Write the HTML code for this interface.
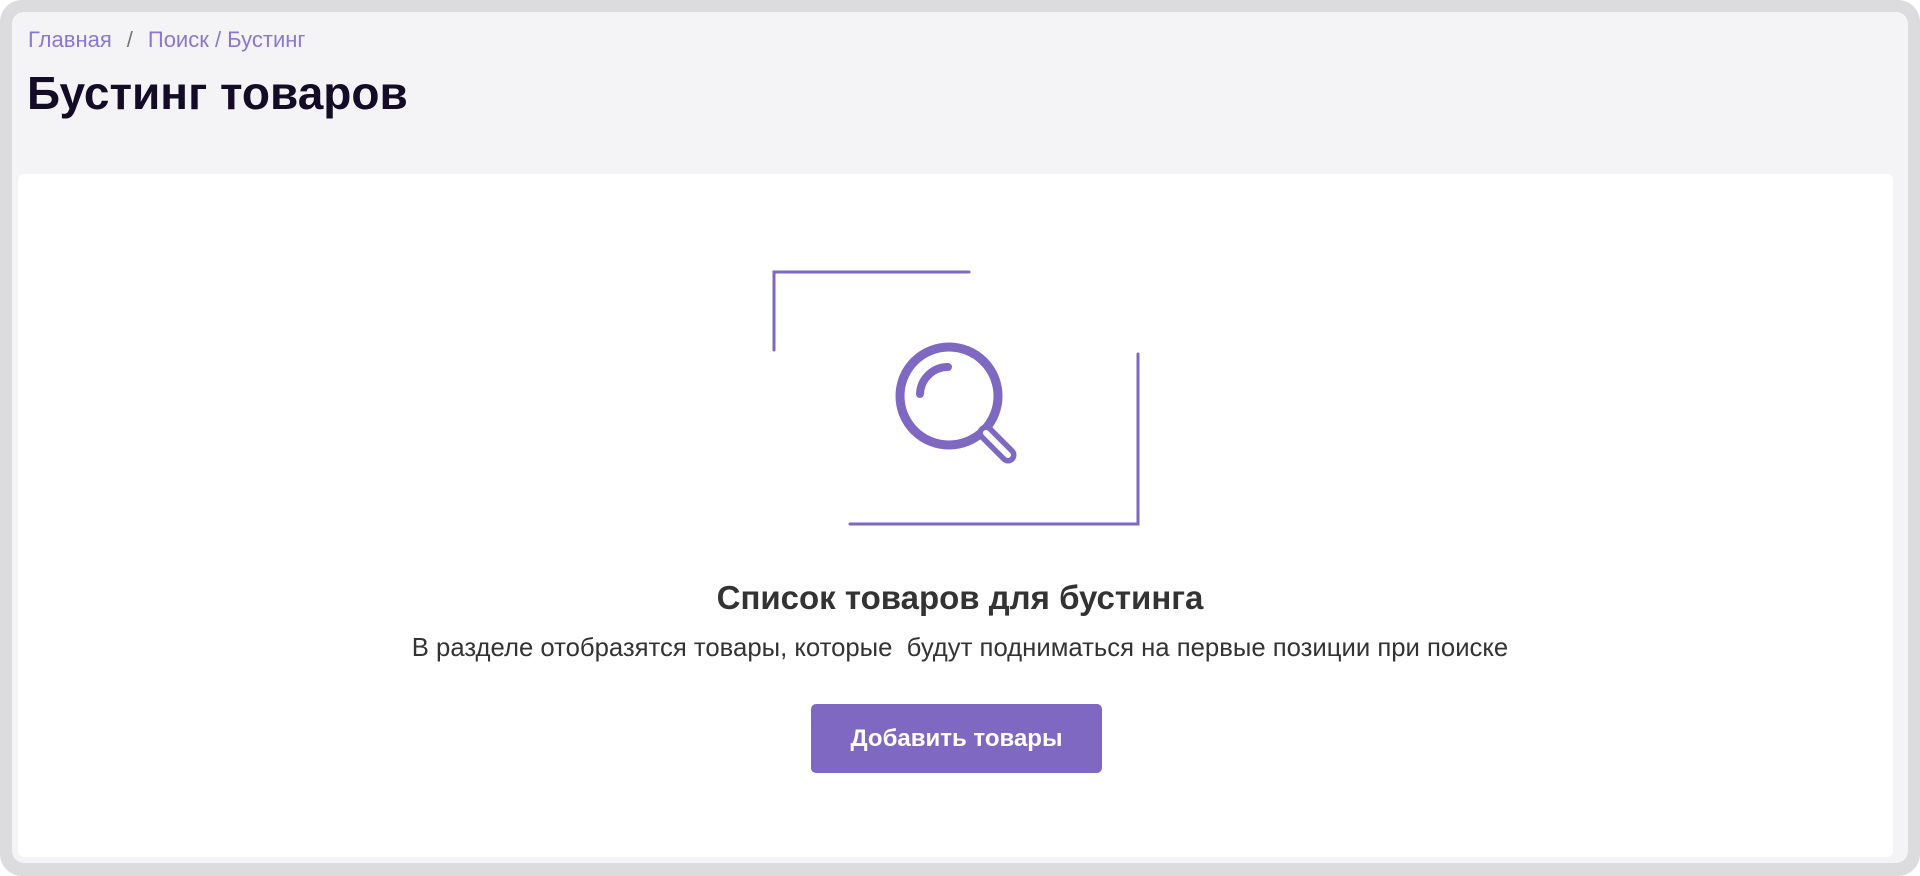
<!DOCTYPE html>
<html><head><meta charset="utf-8"><style>
html,body{margin:0;padding:0;width:1920px;height:876px;overflow:hidden;background:#fff;font-family:"Liberation Sans","Noto Sans CJK SC",sans-serif}
.frame{position:absolute;left:0;top:0;width:1920px;height:876px;background:#dcdcde;border-radius:22px}
.page{position:absolute;left:12px;top:12px;width:1896px;height:851px;background:#f4f4f7;border-radius:12px}
.bc{position:absolute;left:28px;top:27px;font-size:22px;color:#8a77cf}
.bc .sep{color:#777;margin:0 15px}
h1{position:absolute;left:27px;top:66px;margin:0;font-size:46px;font-weight:bold;color:#140c26}
.card{position:absolute;left:18px;top:174px;width:1875px;height:683px;background:#fff;border-radius:6px}
.t1{position:absolute;left:0;width:1920px;top:579px;text-align:center;font-size:33px;font-weight:bold;color:#333}
.t2{position:absolute;left:0;width:1920px;top:634px;text-align:center;font-size:25.7px;color:#333}
.btn{position:absolute;left:811px;top:704px;width:291px;height:69px;background:#7f68c2;border-radius:5px;color:#fff;font-size:24px;font-weight:bold;text-align:center;line-height:69px}
</style></head><body>
<div class="frame"></div>
<div class="page"></div>
<div class="bc">Главная<span class="sep">/</span>Поиск / Бустинг</div>
<h1>Бустинг товаров</h1>
<div class="card"></div>
<svg style="position:absolute;left:0;top:0" width="1920" height="876">
<g fill="none" stroke="#7f68c2" stroke-linecap="round">
<path d="M774 350V272H969" stroke-width="3"/>
<path d="M1138 354V524H850" stroke-width="3"/>
<circle cx="949" cy="396" r="49" stroke-width="9"/>
<path d="M920 394A28 28 0 0 1 948 367" stroke-width="8"/>
<path d="M986 433L1008 455" stroke-width="17"/>
</g>
<path d="M986 433L1008 455" stroke="#fff" stroke-width="6" stroke-linecap="round"/>
</svg>
<div class="t1">Список товаров для бустинга</div>
<div class="t2">В разделе отобразятся товары, которые&nbsp; будут подниматься на первые позиции при поиске</div>
<div class="btn">Добавить товары</div>
</body></html>
